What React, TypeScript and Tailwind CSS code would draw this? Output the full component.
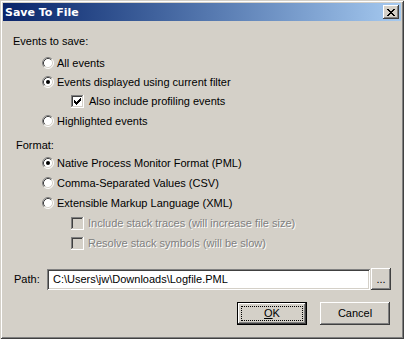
import React from "react";

const FONT = "font-['Liberation_Sans',Arial,sans-serif]";

const Radio = ({ checked }: { checked?: boolean }) => (
  <svg width="12" height="12" viewBox="0 0 12 12" className="shrink-0">
    <circle cx="6" cy="6" r="5" fill="#fff" />
    <path d="M2.11 9.89 A5.5 5.5 0 0 1 9.89 2.11" stroke="#808080" fill="none" />
    <path d="M9.89 2.11 A5.5 5.5 0 0 1 2.11 9.89" stroke="#fff" fill="none" />
    <path d="M2.82 9.18 A4.5 4.5 0 0 1 9.18 2.82" stroke="#404040" fill="none" />
    <path d="M9.18 2.82 A4.5 4.5 0 0 1 2.82 9.18" stroke="#d4d0c8" fill="none" />
    {checked && <circle cx="6" cy="6" r="2" fill="#000" />}
  </svg>
);

const checkCols = [2, 3, 4, 3, 2, 1, 0];

const Checkbox = ({ checked, disabled }: { checked?: boolean; disabled?: boolean }) => (
  <svg width="13" height="13" viewBox="0 0 13 13" shapeRendering="crispEdges" className="shrink-0">
    <rect x="0" y="0" width="13" height="13" fill="#fff" />
    <rect x="0" y="0" width="12" height="1" fill="#808080" />
    <rect x="0" y="0" width="1" height="12" fill="#808080" />
    <rect x="1" y="1" width="10" height="1" fill="#404040" />
    <rect x="1" y="1" width="1" height="10" fill="#404040" />
    <rect x="1" y="11" width="11" height="1" fill="#d4d0c8" />
    <rect x="11" y="1" width="1" height="11" fill="#d4d0c8" />
    <rect x="2" y="2" width="9" height="9" fill={disabled ? "#d4d0c8" : "#fff"} />
    {checked &&
      checkCols.map((y, i) => (
        <rect key={i} x={3 + i} y={3 + y} width="1" height="3" fill="#000" />
      ))}
  </svg>
);

const CloseGlyph = () => (
  <svg width="8" height="7" viewBox="0 0 8 7" shapeRendering="crispEdges">
    {[0, 1, 2, 3, 4, 5, 6].map((i) => (
      <g key={i}>
        <rect x={i} y={i} width="2" height="1" fill="#000" />
        <rect x={6 - i} y={i} width="2" height="1" fill="#000" />
      </g>
    ))}
  </svg>
);

const raised =
  "bg-[#d4d0c8] shadow-[inset_-1px_-1px_0_#404040,inset_1px_1px_0_#fff,inset_-2px_-2px_0_#808080,inset_2px_2px_0_#d4d0c8]";

const sunken =
  "bg-white shadow-[inset_1px_1px_0_#808080,inset_-1px_-1px_0_#fff,inset_2px_2px_0_#404040,inset_-2px_-2px_0_#d4d0c8]";

type Opt = { label: string; kind: "radio" | "check"; checked?: boolean; disabled?: boolean; h: string };

const eventsOpts: Opt[] = [
  { label: "All events", kind: "radio", h: "h-[20px]" },
  { label: "Events displayed using current filter", kind: "radio", checked: true, h: "h-[18px]" },
  { label: "Also include profiling events", kind: "check", checked: true, h: "h-[20px]" },
  { label: "Highlighted events", kind: "radio", h: "h-[20px]" },
];

const formatOpts: Opt[] = [
  { label: "Native Process Monitor Format (PML)", kind: "radio", checked: true, h: "h-[20px]" },
  { label: "Comma-Separated Values (CSV)", kind: "radio", h: "h-[20px]" },
  { label: "Extensible Markup Language (XML)", kind: "radio", h: "h-[20px]" },
  { label: "Include stack traces (will increase file size)", kind: "check", disabled: true, h: "h-[20px]" },
  { label: "Resolve stack symbols (will be slow)", kind: "check", disabled: true, h: "h-[20px]" },
];

const OptionRow = ({ opt }: { opt: Opt }) =>
  opt.kind === "radio" ? (
    <div className={`flex items-center ${opt.h} pl-[39px]`}>
      <Radio checked={opt.checked} />
      <span className="ml-[3px]">{opt.label}</span>
    </div>
  ) : (
    <div className={`flex items-center ${opt.h} pl-[68px]`}>
      <Checkbox checked={opt.checked} disabled={opt.disabled} />
      <span
        className={
          opt.disabled
            ? "ml-[4px] text-[#808080] [text-shadow:1px_1px_0_#fff]"
            : "ml-[5px]"
        }
      >
        {opt.label}
      </span>
    </div>
  );

export default function App() {
  return (
    <div
      className={`${FONT} flex h-[339px] w-[404px] flex-col bg-[#d4d0c8] p-[3px] text-[11px] leading-[13px] text-black shadow-[inset_1px_1px_0_#d4d0c8,inset_-1px_-1px_0_#404040,inset_2px_2px_0_#fff,inset_-2px_-2px_0_#808080]`}
    >
      <div className="flex h-[18px] items-center justify-between bg-gradient-to-r from-[#0a246a] to-[#a6caf0] pl-[2px] pr-[2px]">
        <span className="font-['DejaVu_Sans',sans-serif] text-[11px] font-bold text-white">Save To File</span>
        <div className={`flex h-[14px] w-[16px] items-center justify-center ${raised}`}>
          <CloseGlyph />
        </div>
      </div>

      <div className="mt-[14px] pl-[10px]">Events to save:</div>
      <div className="mt-[5px] flex flex-col">
        {eventsOpts.map((o) => (
          <OptionRow key={o.label} opt={o} />
        ))}
      </div>

      <div className="mt-[8px] pl-[13px]">Format:</div>
      <div className="mt-[1px] flex flex-col">
        {formatOpts.map((o) => (
          <OptionRow key={o.label} opt={o} />
        ))}
      </div>

      <div className="mt-[15px] flex items-center">
        <span className="w-[44px] pl-[11px]">Path:</span>
        <div className={`flex h-[21px] w-[323px] items-center pl-[6px] ${sunken}`}>
          C:\Users\jw\Downloads\Logfile.PML
        </div>
        <div className={`ml-[1px] flex h-[22px] w-[20px] items-center justify-center ${raised}`}>
          ...
        </div>
      </div>

      <div className="mt-[12px] flex justify-end gap-[13px] pr-[11px]">
        <div className="flex h-[23px] w-[70px] border border-black">
          <div className={`flex flex-1 items-center justify-center p-[3px] ${raised}`}>
            <div className="flex h-full w-full items-center justify-center border border-dotted border-black">
              <span>
                <span className="underline">O</span>K
              </span>
            </div>
          </div>
        </div>
        <div className={`flex h-[23px] w-[70px] items-center justify-center ${raised}`}>Cancel</div>
      </div>
    </div>
  );
}
